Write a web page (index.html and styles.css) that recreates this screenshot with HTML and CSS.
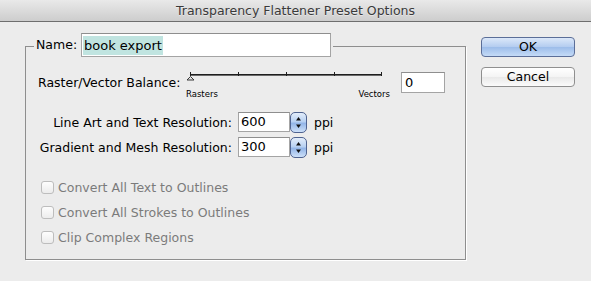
FILE: index.html
```html
<!DOCTYPE html>
<html>
<head>
<meta charset="utf-8">
<title>Transparency Flattener Preset Options</title>
<link rel="stylesheet" href="styles.css">
</head>
<body>
<div class="window">
  <div class="titlebar">Transparency Flattener Preset Options</div>
  <div class="dialog">
    <fieldset class="group">
      <legend class="name-legend">
        <span class="legend-inner">
          <span class="name-label">Name:</span>
          <span class="field name-input"><span class="sel">book export</span></span>
        </span>
      </legend>
      <div class="group-body">
        <div class="balance-row">
          <span class="balance-label">Raster/Vector Balance:</span>
          <div class="slider">
            <svg class="track" width="204" height="12" viewBox="0 0 204 12">
              <rect x="4" y="4" width="192" height="1" fill="#1e1e1e"/>
              <rect x="4" y="5" width="192" height="1" fill="#6a6a6a"/>
              <rect x="4" y="2" width="1" height="4" fill="#1e1e1e"/>
              <rect x="52" y="2" width="1" height="4" fill="#1e1e1e"/>
              <rect x="100" y="2" width="1" height="4" fill="#1e1e1e"/>
              <rect x="148" y="2" width="1" height="4" fill="#1e1e1e"/>
              <rect x="195" y="2" width="1" height="4" fill="#1e1e1e"/>
              <path d="M4.5 6.5 L8 10 L1 10 Z" fill="#e4e4e4" stroke="#3a3a3a" stroke-width="1" stroke-linejoin="round"/>
            </svg>
            <div class="slider-labels"><span>Rasters</span><span>Vectors</span></div>
          </div>
          <span class="field balance-input">0</span>
        </div>
        <div class="res-row">
          <span class="res-label">Line Art and Text Resolution:</span>
          <span class="field res-input">600</span>
          <span class="spinner">
            <svg width="15" height="19" viewBox="0 0 15 19">
              <path d="M7.5 4 L10 7.5 L5 7.5 Z" fill="#111"/>
              <path d="M7.5 15 L10 11.5 L5 11.5 Z" fill="#111"/>
            </svg>
          </span>
          <span class="unit">ppi</span>
        </div>
        <div class="res-row">
          <span class="res-label">Gradient and Mesh Resolution:</span>
          <span class="field res-input">300</span>
          <span class="spinner">
            <svg width="15" height="19" viewBox="0 0 15 19">
              <path d="M7.5 4 L10 7.5 L5 7.5 Z" fill="#111"/>
              <path d="M7.5 15 L10 11.5 L5 11.5 Z" fill="#111"/>
            </svg>
          </span>
          <span class="unit">ppi</span>
        </div>
        <div class="checks">
          <div class="check-row"><span class="box"></span><span class="check-label">Convert All Text to Outlines</span></div>
          <div class="check-row"><span class="box"></span><span class="check-label">Convert All Strokes to Outlines</span></div>
          <div class="check-row"><span class="box"></span><span class="check-label">Clip Complex Regions</span></div>
        </div>
      </div>
    </fieldset>
    <div class="buttons">
      <div class="btn btn-default">OK</div>
      <div class="btn">Cancel</div>
    </div>
  </div>
</div>
</body>
</html>
```
FILE: styles.css
```css
html, body {
  margin: 0;
  padding: 0;
  background: #ececec;
}
body {
  font-family: "DejaVu Sans", "Liberation Sans", sans-serif;
  font-size: 12.5px;
  color: #000;
}
.window {
  width: 591px;
  height: 281px;
  overflow: hidden;
}
.titlebar {
  height: 21px;
  line-height: 21px;
  border-bottom: 1px solid #6e6e6e;
  background: linear-gradient(#e9e9e9, #cdcdcd);
  text-align: center;
  color: #3a3a3a;
  font-size: 12.5px;
  text-shadow: 0 1px 0 rgba(255, 255, 255, 0.45);
}
.dialog {
  display: flex;
  align-items: flex-start;
  padding-left: 25px;
}
.group {
  margin: 11px 0 0 0;
  padding: 0;
  width: 439px;
  min-width: 0;
  border: 1px solid #8e8e8e;
  box-shadow: 1px 1px 0 #fff;
}
.name-legend {
  margin-left: 8px;
  padding: 0 2px 3px;
}
.legend-inner {
  display: flex;
  align-items: center;
  height: 24px;
}
.name-label {
  width: 45px;
  line-height: 24px;
}
.field {
  box-sizing: border-box;
  background: #fff;
  border: 1px solid #a4a4a4;
  border-top-color: #8e8e8e;
  font-size: 13px;
}
.name-input {
  display: flex;
  align-items: center;
  width: 250px;
  height: 24px;
  padding: 0 1px;
}
.sel {
  display: inline-block;
  background: #c0e4e0;
  line-height: 19px;
  padding: 0 1px;
}
.group-body {
  height: 199px;
  padding-top: 10px;
  box-sizing: border-box;
}
.balance-row {
  display: flex;
  align-items: flex-start;
  height: 32px;
}
.balance-label {
  box-sizing: border-box;
  width: 160px;
  padding-left: 12px;
  margin-top: 5px;
  line-height: 15px;
  white-space: nowrap;
}
.slider {
  width: 204px;
}
.track {
  display: block;
}
.slider-labels {
  display: flex;
  justify-content: space-between;
  margin-top: 7px;
  font-size: 8.5px;
  line-height: 10px;
}
.balance-input {
  margin-left: 11px;
  margin-top: 2px;
  width: 44px;
  height: 21px;
  line-height: 19px;
  padding-left: 3px;
}
.res-row {
  display: flex;
  align-items: center;
  height: 20px;
  margin-top: 10px;
}
.res-row + .res-row {
  margin-top: 5px;
}
.res-label {
  width: 206px;
  text-align: right;
  white-space: nowrap;
}
.res-input {
  margin-left: 6px;
  width: 52px;
  height: 20px;
  line-height: 18px;
  padding-left: 2px;
}
.spinner {
  box-sizing: border-box;
  width: 17px;
  height: 21px;
  border: 1px solid #4f6390;
  border-radius: 5px;
  background: linear-gradient(#e3edfa 0%, #b8d1f2 45%, #94b6e8 55%, #cde0f8 100%);
  display: flex;
  align-items: center;
  justify-content: center;
}
.spinner svg {
  display: block;
}
.unit {
  margin-left: 7px;
}
.checks {
  margin-top: 18px;
}
.check-row {
  display: flex;
  align-items: center;
  height: 25px;
}
.box {
  box-sizing: border-box;
  width: 13px;
  height: 13px;
  margin-left: 15px;
  border: 1px solid #bdbdbd;
  border-radius: 3px;
  background: linear-gradient(#fdfdfd, #ececec);
}
.check-label {
  margin-left: 4px;
  color: #7b7b7b;
}
.buttons {
  display: flex;
  flex-direction: column;
  gap: 10px;
  margin-left: 15px;
  margin-top: 15px;
  width: 94px;
}
.btn {
  box-sizing: border-box;
  height: 20px;
  line-height: 18px;
  text-align: center;
  border: 1px solid #8f8f8f;
  border-radius: 4px;
  background: linear-gradient(#ffffff 0%, #f4f4f4 50%, #e9e9e9 51%, #fbfbfb 100%);
}
.btn-default {
  border-color: #5b6e98;
  background: linear-gradient(#dce8f9 0%, #b5cdf0 48%, #9dbdea 52%, #c4dbf7 100%);
}
```
